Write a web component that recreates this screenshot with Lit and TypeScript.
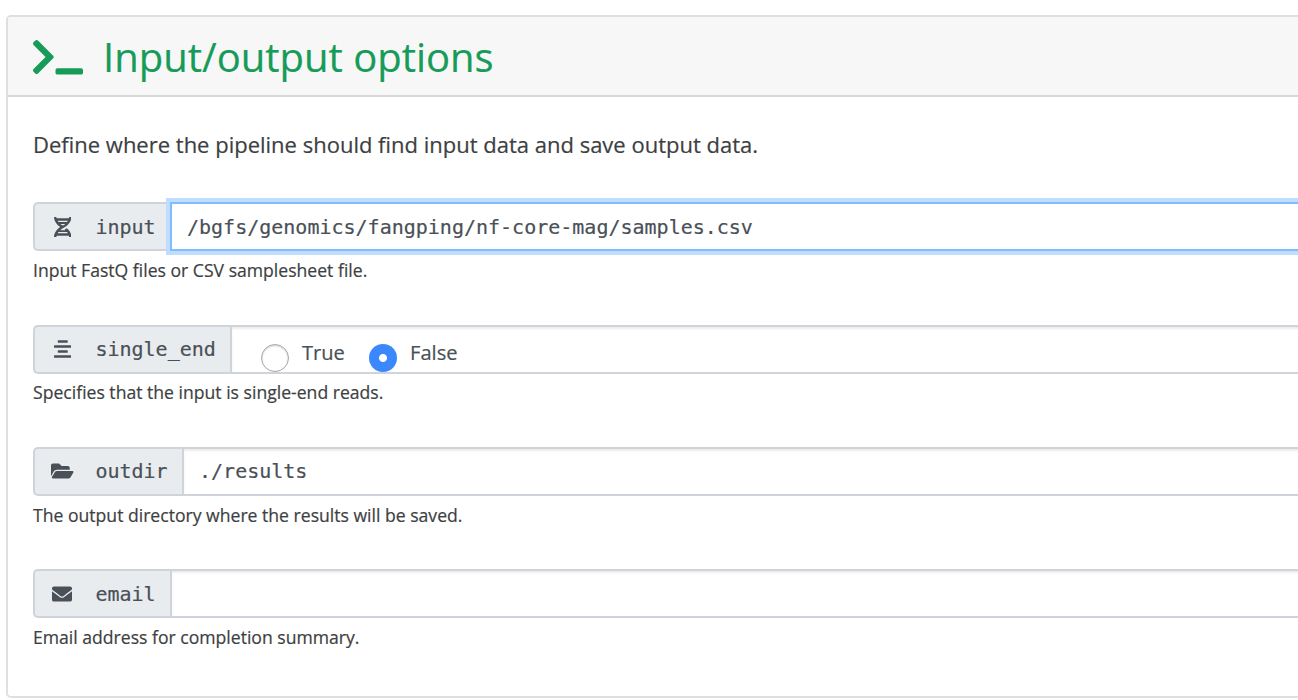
import { LitElement, html, css, svg, nothing } from "lit";
import { customElement } from "lit/decorators.js";
import { classMap } from "lit/directives/class-map.js";

interface Field {
  name: string;
  icon: string;
  help: string;
  value?: string;
  focused?: boolean;
  options?: { label: string; checked: boolean }[];
}

const ICONS: Record<string, { w: number; d: string }> = {
  terminal: {
    w: 640,
    d: "M257.981 272.971L63.638 467.314c-9.373 9.373-24.569 9.373-33.941 0L7.029 444.647c-9.357-9.357-9.375-24.522-.04-33.901L161.011 256 6.99 101.255c-9.335-9.379-9.317-24.544.04-33.901l22.667-22.667c9.373-9.373 24.569-9.373 33.941 0L257.981 239.03c9.373 9.372 9.373 24.568 0 33.941zM640 456v-32c0-13.255-10.745-24-24-24H312c-13.255 0-24 10.745-24 24v32c0 13.255 10.745 24 24 24h304c13.255 0 24-10.745 24-24z",
  },
  dna: {
    w: 448,
    d: "M.1 494.1c-1.1 9.5 6.3 17.8 15.9 17.8l32.3.1c8.1 0 14.9-5.9 16-13.9.7-4.9 1.8-11.1 3.4-18.1H380c1.6 6.9 2.9 13.2 3.5 18.1 1.1 8 7.9 14 16 13.9l32.3-.1c9.6 0 17.1-8.3 15.9-17.8-4.6-37.9-25.6-129-118.9-207.7-17.6 12.4-37.1 24.2-58.5 35.4 6.2 4.6 11.4 9.4 17 14.2H159.7c21.3-18.1 47-35.6 78.7-51.4C410.5 199.1 442.1 65.8 447.9 17.9 449 8.4 441.6.1 432 .1L399.6 0c-8.1 0-14.9 5.9-16 13.9-.7 4.9-1.8 11.1-3.4 18.1H67.8c-1.6-7-2.7-13.1-3.4-18.1-1.1-8-7.9-14-16-13.9L16.1.1C6.5.1-1 8.4.1 17.9 5.3 60.8 31.4 171.8 160 256 31.5 340.2 5.3 451.2.1 494.1zM224 219.6c-25.1-13.7-46.4-28.4-64.3-43.6h128.5c-17.8 15.2-39.1 30-64.2 43.6zM355.1 96c-5.8 10.4-12.8 21.1-21 32H114c-8.3-10.9-15.3-21.6-21-32h262.1zM92.9 416c5.8-10.4 12.8-21.1 21-32h219.4c8.3 10.9 15.4 21.6 21.2 32H92.9z",
  },
  align: {
    w: 448,
    d: "M432 160H16a16 16 0 0 0-16 16v32a16 16 0 0 0 16 16h416a16 16 0 0 0 16-16v-32a16 16 0 0 0-16-16zm0 256H16a16 16 0 0 0-16 16v32a16 16 0 0 0 16 16h416a16 16 0 0 0 16-16v-32a16 16 0 0 0-16-16zM108.1 96h231.81A12.09 12.09 0 0 0 352 83.9V44.09A12.09 12.09 0 0 0 339.91 32H108.1A12.09 12.09 0 0 0 96 44.09V83.9A12.1 12.1 0 0 0 108.1 96zm231.81 256A12.09 12.09 0 0 0 352 339.9v-39.81A12.09 12.09 0 0 0 339.91 288H108.1A12.09 12.09 0 0 0 96 300.09v39.81a12.1 12.1 0 0 0 12.1 12.1z",
  },
  folder: {
    w: 576,
    d: "M572.694 292.093L500.27 416.248A63.997 63.997 0 0 1 444.989 448H45.025c-18.523 0-30.064-20.093-20.731-36.093l72.424-124.155A64 64 0 0 1 152 256h399.964c18.523 0 30.064 20.093 20.73 36.093zM152 224h328v-48c0-26.51-21.49-48-48-48H272l-64-64H48C21.49 64 0 85.49 0 112v278.046l69.077-118.418C86.214 242.25 117.989 224 152 224z",
  },
  envelope: {
    w: 512,
    d: "M502.3 190.8c3.9-3.1 9.7-.2 9.7 4.7V400c0 26.5-21.5 48-48 48H48c-26.5 0-48-21.5-48-48V195.6c0-5 5.7-7.8 9.7-4.7 22.4 17.4 52.1 39.5 154.1 113.6 21.1 15.4 56.7 47.8 92.2 47.6 35.7.3 72-32.8 92.3-47.6 102-74.1 131.6-96.3 154-113.7zM256 320c23.2.4 56.6-29.2 73.4-41.4 132.7-96.3 142.8-104.7 173.4-128.7 5.8-4.5 9.2-11.5 9.2-18.9v-19c0-26.5-21.5-48-48-48H48c-26.5 0-48 21.5-48 48v19c0 7.4 3.4 14.3 9.2 18.9 30.6 23.9 40.7 32.4 173.4 128.7 16.8 12.2 50.2 41.8 73.4 41.4z",
  },
};

const icon = (name: string) => html`<svg class="icon" viewBox="0 0 ${ICONS[name].w} 512" aria-hidden="true">
  ${svg`<path fill="currentColor" d=${ICONS[name].d}></path>`}
</svg>`;

const FIELDS: Field[] = [
  {
    name: "input",
    icon: "dna",
    value: "/bgfs/genomics/fangping/nf-core-mag/samples.csv",
    focused: true,
    help: "Input FastQ files or CSV samplesheet file.",
  },
  {
    name: "single_end",
    icon: "align",
    options: [
      { label: "True", checked: false },
      { label: "False", checked: true },
    ],
    help: "Specifies that the input is single-end reads.",
  },
  { name: "outdir", icon: "folder", value: "./results", help: "The output directory where the results will be saved." },
  { name: "email", icon: "envelope", value: "", help: "Email address for completion summary." },
];

@customElement("app-root")
export class AppRoot extends LitElement {
  static styles = css`
    :host {
      display: block;
      box-sizing: border-box;
      height: 700px;
      padding: 15px 0 2px 6px;
      overflow: hidden;
      background: #fff;
      color: #3d3f42;
      font-family: "Open Sans", "Noto Sans", sans-serif;
      -webkit-text-stroke: 0.2px currentColor;
    }
    * {
      box-sizing: border-box;
    }
    .card {
      width: 1400px;
      height: 683px;
      border: 2px solid #dfdfdf;
      border-radius: 5px;
      overflow: hidden;
    }
    .header {
      display: flex;
      align-items: center;
      gap: 20px;
      height: 80px;
      padding: 0 25px;
      border-bottom: 2px solid #d8d8d8;
      background: #f7f7f7;
      color: #179b58;
    }
    .icon {
      display: block;
      height: 20px;
      flex: none;
    }
    .header .icon {
      height: 40px;
      margin-top: 1px;
    }
    h1 {
      margin: 0;
      font-size: 40px;
      font-weight: 400;
      line-height: 48px;
      margin-top: 2px;
      white-space: nowrap;
    }
    .body {
      padding: 30px 25px 0;
    }
    .intro {
      margin: 0 0 41.2px;
      font-size: 22px;
      line-height: 34px;
      white-space: nowrap;
    }
    .field {
      height: 122.3px;
    }
    .field:first-of-type {
      height: 122.4px;
    }
    .group {
      display: flex;
      height: 49px;
    }
    .label {
      display: flex;
      align-items: center;
      gap: 18px;
      padding: 0 14.2px 0 12.5px;
      border: 2px solid #ced4da;
      border-right: 0;
      border-radius: 5px 0 0 5px;
      background: #e9ecef;
      color: #495057;
    }
    .slot {
      display: flex;
      justify-content: center;
      width: 29.9px;
    }
    .mono {
      font: 20px/30px "DejaVu Sans Mono", monospace;
      white-space: pre;
    }
    .control {
      display: flex;
      flex: 1;
      align-items: center;
      padding: 0 15.2px;
      border: 2px solid #ced4da;
      background: #fff;
      box-shadow: inset 0 2px 2px rgba(0, 0, 0, 0.075);
      color: #495057;
    }
    .focused {
      border-color: #80bdff;
      box-shadow: 0 0 0 4px #bfdeff;
    }
    .radios {
      align-items: flex-start;
      padding: 11px 0 0 28.8px;
    }
    .choice {
      display: flex;
      gap: 13.2px;
      margin-right: 24px;
      font-size: 20.1px;
      line-height: 30px;
    }
    .dot {
      width: 28px;
      height: 28px;
      margin-top: 6px;
      border: 1px solid #a6a6a6;
      border-radius: 50%;
      background: #fff;
      box-shadow: inset 0 1px 2px rgba(0, 0, 0, 0.2);
    }
    .dot.checked {
      border: 0;
      background: radial-gradient(circle, #fff 3.6px, #3b88fd 4.4px);
      box-shadow: none;
    }
    .help {
      margin-top: 4.8px;
      font-size: 17.6px;
      line-height: 28px;
      white-space: nowrap;
    }
  `;

  private renderControl(f: Field) {
    if (f.options) {
      return html`<div class="control radios">
        ${f.options.map(
          (o) => html`<label class="choice"><span class=${classMap({ dot: true, checked: o.checked })}></span><span>${o.label}</span></label>`
        )}
      </div>`;
    }
    return html`<div class=${classMap({ control: true, focused: !!f.focused })}>
      ${f.value ? html`<span class="mono">${f.value}</span>` : nothing}
    </div>`;
  }

  render() {
    return html`<section class="card">
      <header class="header">${icon("terminal")}<h1>Input/output options</h1></header>
      <div class="body">
        <p class="intro">Define where the pipeline should find input data and save output data.</p>
        ${FIELDS.map(
          (f) => html`<div class="field">
            <div class="group">
              <div class="label"><span class="slot">${icon(f.icon)}</span><span class="mono">${f.name}</span></div>
              ${this.renderControl(f)}
            </div>
            <div class="help">${f.help}</div>
          </div>`
        )}
      </div>
    </section>`;
  }
}
